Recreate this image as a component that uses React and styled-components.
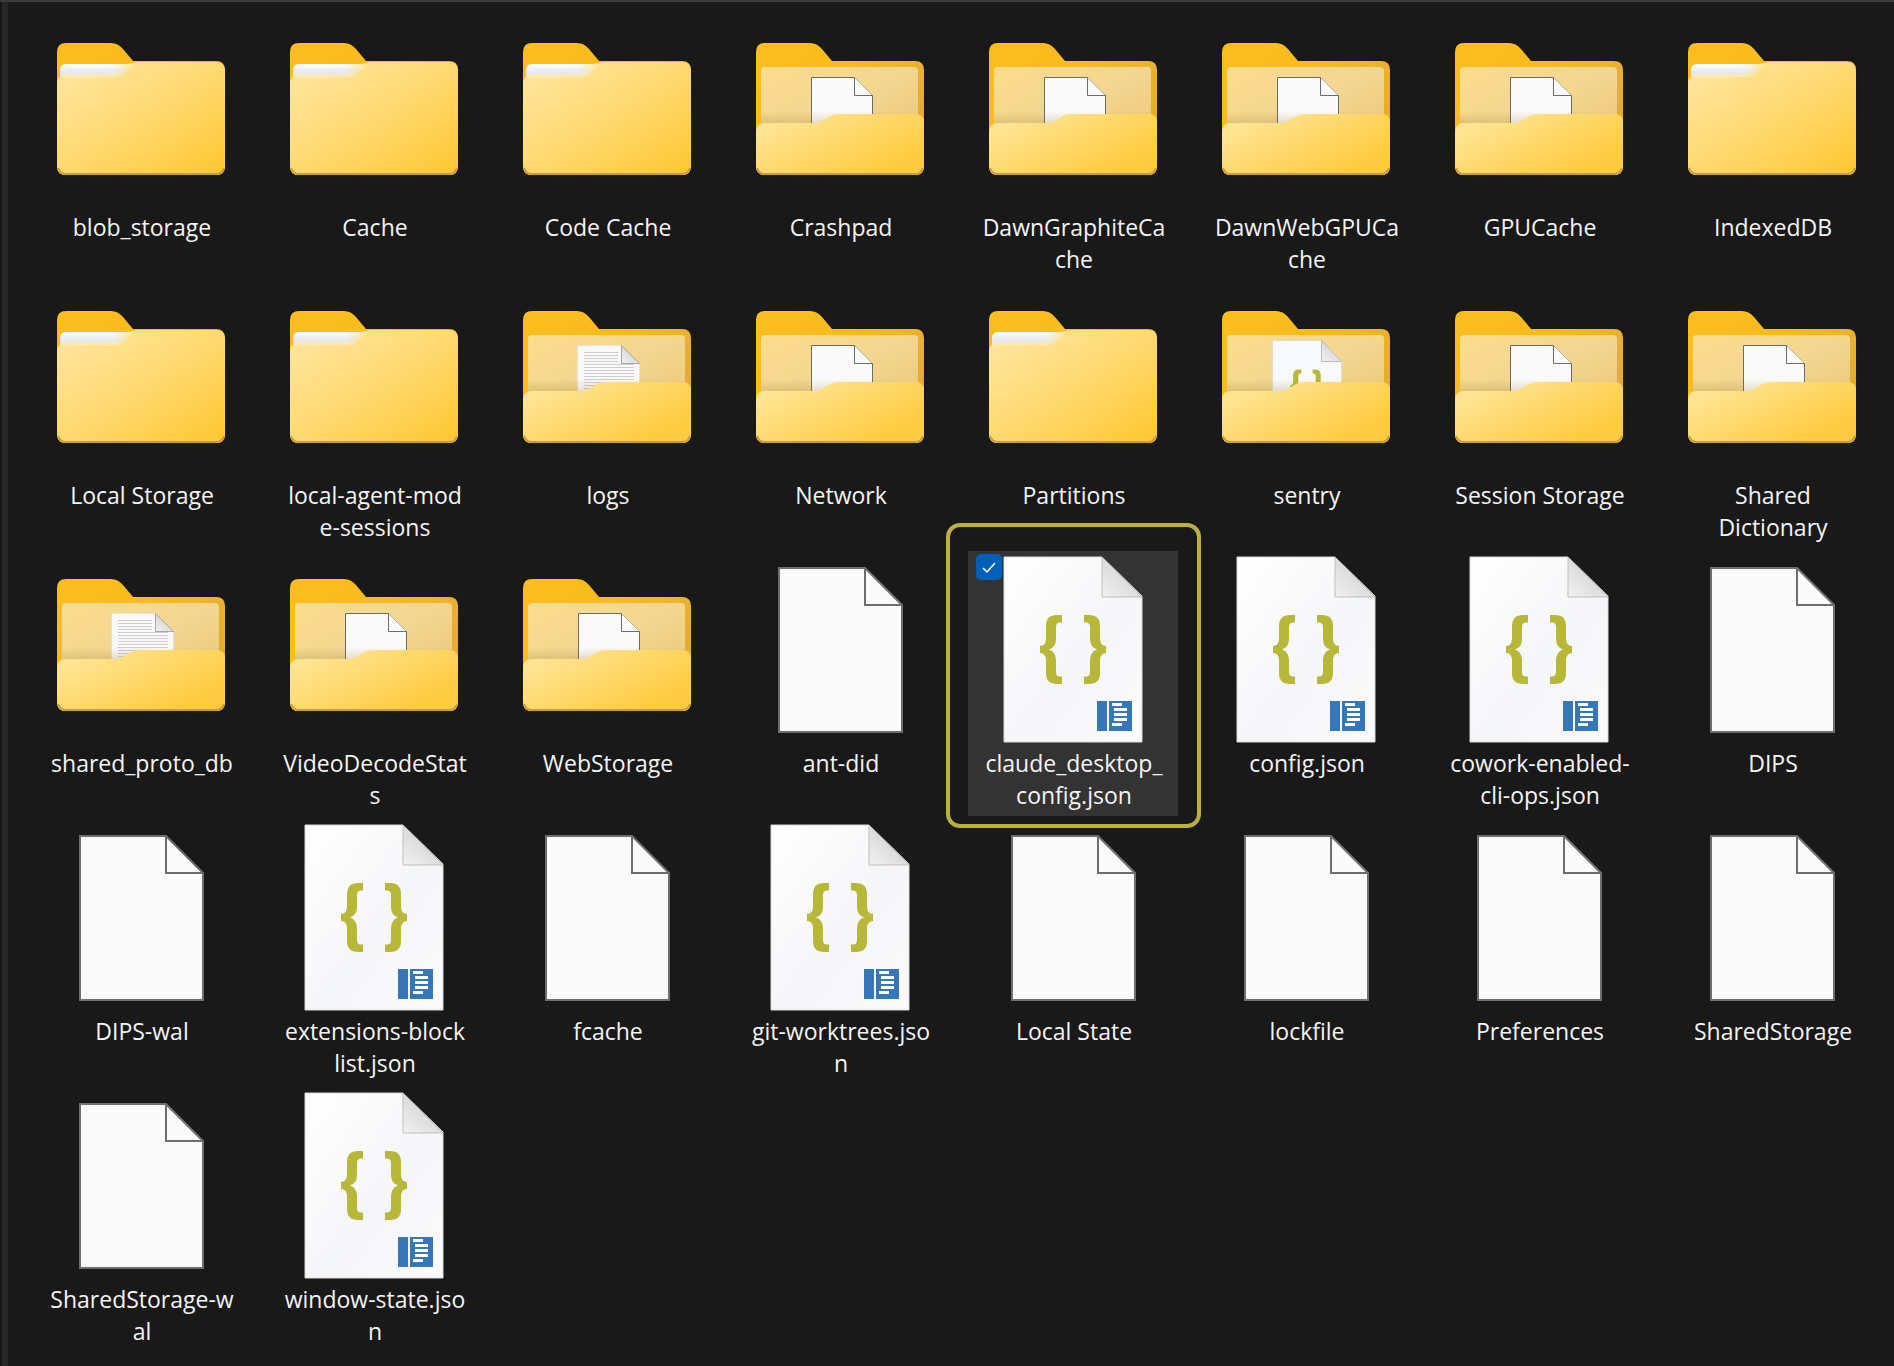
import React from "react";
import styled, { createGlobalStyle, css } from "styled-components";

const GlobalStyle = createGlobalStyle`
  *, *::before, *::after { box-sizing: border-box; }
  html { background: #191919; }
  body {
    margin: 0;
    background: #191919;
    color: #f4f4f4;
    font-family: "Open Sans", "Noto Sans", sans-serif;
  }
`;

const Pane = styled.main`
  min-height: 100vh;
  border-top: 2px solid #3c3c3c;
  background: linear-gradient(90deg, #151515 2px, #262626 2px, #262626 8px, #191919 8px);
  padding: 13px 16px 0 36px;
`;

const FileGrid = styled.ul`
  list-style: none;
  margin: 0;
  padding: 0;
  display: grid;
  grid-template-columns: repeat(auto-fill, 210px);
  gap: 3px 23px;
`;

const Tile = styled.li`
  position: relative;
  display: flex;
  flex-direction: column;
  align-items: center;
  height: 265px;
  padding-top: 4px;
  ${(p) =>
    p.$selected &&
    css`
      background: #333333;
      &::after {
        content: "";
        position: absolute;
        inset: -28px -23px -12px -22px;
        border: 4px solid #b9b03f;
        border-radius: 14px;
        pointer-events: none;
      }
    `}
`;

const Glyph = styled.svg`
  display: block;
  width: 192px;
  height: 192px;
`;

const FileName = styled.span`
  padding-left: 2px;
  font-size: 23px;
  line-height: 32px;
  text-align: center;
  white-space: pre;
`;

const Check = styled.input`
  appearance: none;
  position: absolute;
  top: 3px;
  left: 8px;
  width: 26px;
  height: 26px;
  margin: 0;
  border-radius: 5px;
  background: #005fb8;
`;

const CheckMark = styled.svg`
  position: absolute;
  top: 3px;
  left: 8px;
  width: 26px;
  height: 26px;
  pointer-events: none;
`;

const SharedDefs = styled.svg`
  position: absolute;
  width: 0;
  height: 0;
`;

const BACK =
  "M12 33Q12 24 21 24H66Q73 24 78 30L88 42H171Q180 42 180 51V147Q180 156 171 156H21Q12 156 12 147Z";
const BRACE =
  "M85 60V67.500H83Q79 67.500 79 72V84Q79 92 72 94.500Q79 97 79 105V117Q79 121.500 83 121.500H85V129H80Q69 129 69 118V106Q69 98 63 98V91Q69 91 69 83V71Q69 60 80 60Z";

function Gradients() {
  return (
    <SharedDefs aria-hidden="true">
      <defs>
        <linearGradient id="tab" x1="0" y1="0" x2="1" y2="1">
          <stop offset="0" stopColor="#fcbd1e" />
          <stop offset=".35" stopColor="#fabb1c" />
          <stop offset=".6" stopColor="#e9b032" />
          <stop offset="1" stopColor="#e0a526" />
        </linearGradient>
        <linearGradient id="front" gradientUnits="userSpaceOnUse" x1="45" y1="35" x2="135" y2="175">
          <stop offset="0" stopColor="#ffe59e" />
          <stop offset=".5" stopColor="#ffd970" />
          <stop offset="1" stopColor="#ffc834" />
        </linearGradient>
        <linearGradient id="pocket" gradientUnits="userSpaceOnUse" x1="50" y1="95" x2="90" y2="175">
          <stop offset="0" stopColor="#ffe493" />
          <stop offset=".5" stopColor="#ffd86a" />
          <stop offset="1" stopColor="#ffcb40" />
        </linearGradient>
        <linearGradient id="inner" x1="0" y1="0" x2="1" y2="1">
          <stop offset="0" stopColor="#fbdd8e" />
          <stop offset=".5" stopColor="#f3d690" />
          <stop offset="1" stopColor="#e8c678" />
        </linearGradient>
        <linearGradient id="slip" x1="0" y1="0" x2="0" y2="1">
          <stop offset="0" stopColor="#ffffff" />
          <stop offset=".35" stopColor="#eef2f7" />
          <stop offset=".65" stopColor="#e6e9ee" />
          <stop offset="1" stopColor="#ffe9ae" />
        </linearGradient>
        <linearGradient id="slipFade" x1="0" y1="0" x2="1" y2="0">
          <stop offset=".7" stopColor="#ffe59a" stopOpacity="0" />
          <stop offset="1" stopColor="#ffe59a" />
        </linearGradient>
        <linearGradient id="sheet" x1="0" y1="0" x2="1" y2="1">
          <stop offset="0" stopColor="#ffffff" />
          <stop offset=".55" stopColor="#f5f6f8" />
          <stop offset="1" stopColor="#fbfbfc" />
        </linearGradient>
        <linearGradient id="fold" x1="0" y1="1" x2=".6" y2=".3">
          <stop offset="0" stopColor="#f1f1f1" />
          <stop offset="1" stopColor="#d6d6d6" />
        </linearGradient>
        <linearGradient id="shade" x1="0" y1="0" x2="0" y2="1">
          <stop offset="0" stopColor="#8a6a20" stopOpacity="0" />
          <stop offset="1" stopColor="#8a6a20" stopOpacity=".26" />
        </linearGradient>
      </defs>
    </SharedDefs>
  );
}

function Braces({ transform }) {
  return (
    <g fill="#b7b83a" transform={transform}>
      <path d={BRACE} />
      <path d={BRACE} transform="matrix(-1 0 0 1 192 0)" />
    </g>
  );
}

function Folder() {
  return (
    <Glyph viewBox="0 0 192 192" aria-hidden="true">
      <path d={BACK} fill="url(#tab)" />
      <path
        d="M12 65Q12 59 15 58V52Q15 45 22 45H82L88 44Q90 43 94 43H171Q180 43 180 52V147Q180 156 171 156H21Q12 156 12 147Z"
        fill="url(#front)"
      />
      <path d="M15 58V51Q15 45 22 45H89L80 53Q76 58 69 58Z" fill="url(#slip)" />
      <path d="M15 58V51Q15 45 22 45H89L80 53Q76 58 69 58Z" fill="url(#slipFade)" />
      <path d="M13 149Q15 155 21 155H171Q177 155 179 149" fill="none" stroke="#cf9d2c" strokeWidth="2" />
    </Glyph>
  );
}

function BlankSheet() {
  return (
    <g fill="#fafafa" stroke="#6b6b6b" strokeWidth="1">
      <path d="M67.500 120V58.500H110.500L128.500 76.500V120Z" />
      <path d="M110.500 58.500V76.500H128.500" />
    </g>
  );
}

function TextSheet() {
  return (
    <g strokeWidth="1">
      <path d="M66.500 120V58.500H110L128.500 76.500V120Z" fill="#f9f9fa" stroke="#e6e2d8" />
      <path
        d="M73 65.500H107M73 68.500H107M73 71.500H107M73 74.500H107M73 77.500H123M73 80.500H123M73 83.500H123M73 86.500H123M73 89.500H123M73 92.500H123M73 95.500H123M73 98.500H123M73 101.500H123"
        stroke="#cccdd1"
      />
      <path d="M110.500 58.500V76.500H128.500Z" fill="url(#fold)" stroke="#a6a6a6" />
    </g>
  );
}

function JsonSheet() {
  return (
    <g strokeWidth="1">
      <path d="M62.500 120V53.500H111L131.500 74V120Z" fill="#f8f9fa" stroke="#e4dcc6" />
      <path d="M111.500 53.500V74.500H131.500Z" fill="url(#fold)" stroke="#bdbdbd" />
      <Braces transform="translate(48 52) scale(.51)" />
    </g>
  );
}

const sheets = { blank: BlankSheet, text: TextSheet, json: JsonSheet };

function OpenFolder({ content }) {
  const Sheet = sheets[content];
  return (
    <Glyph viewBox="0 0 192 192" aria-hidden="true">
      <path d={BACK} fill="url(#tab)" />
      <rect x="17" y="48" width="157" height="80" rx="4" fill="url(#inner)" />
      <Sheet />
      <path d="M17 92H174V108H17Z" fill="url(#shade)" />
      <path
        d="M12 113Q12 104 21 104H69Q75 104 79 101L86 97Q90 95 95 95H171Q180 95 180 103V147Q180 156 171 156H21Q12 156 12 147Z"
        fill="url(#pocket)"
      />
      <path d="M13 149Q15 155 21 155H171Q177 155 179 149" fill="none" stroke="#cf9d2c" strokeWidth="2" />
    </Glyph>
  );
}

function BlankFile() {
  return (
    <Glyph viewBox="0 0 192 192" aria-hidden="true">
      <g fill="#fafafa" stroke="#6e6e6e" strokeWidth="2">
        <path d="M35 13H121L158 50V177H35Z" />
        <path d="M121 13V50H158" fill="none" />
      </g>
    </Glyph>
  );
}

function JsonFile() {
  return (
    <Glyph viewBox="0 0 192 192" aria-hidden="true">
      <path d="M27 2H125L165 41V187H27Z" fill="url(#sheet)" stroke="#d9d9d9" strokeWidth="1" />
      <path d="M125 2L165 42H125Z" fill="url(#fold)" stroke="#bfbfbf" strokeWidth="1" />
      <Braces />
      <rect x="120" y="146" width="10" height="30" fill="#3577b8" />
      <rect x="132" y="146" width="23" height="30" fill="#3577b8" />
      <path
        d="M135 149.500H145M137 154.500H150M137 159.500H150M137 164.500H150M135 169.500H145"
        stroke="#ffffff"
        strokeWidth="3"
      />
    </Glyph>
  );
}

const items = [
  ["folder", "blob_storage"],
  ["folder", "Cache"],
  ["folder", "Code Cache"],
  ["open", "Crashpad", "blank"],
  ["open", "DawnGraphiteCa\nche", "blank"],
  ["open", "DawnWebGPUCa\nche", "blank"],
  ["open", "GPUCache", "blank"],
  ["folder", "IndexedDB"],
  ["folder", "Local Storage"],
  ["folder", "local-agent-mod\ne-sessions"],
  ["open", "logs", "text"],
  ["open", "Network", "blank"],
  ["folder", "Partitions"],
  ["open", "sentry", "json"],
  ["open", "Session Storage", "blank"],
  ["open", "Shared\nDictionary", "blank"],
  ["open", "shared_proto_db", "text"],
  ["open", "VideoDecodeStat\ns", "blank"],
  ["open", "WebStorage", "blank"],
  ["file", "ant-did"],
  ["json", "claude_desktop_\nconfig.json"],
  ["json", "config.json"],
  ["json", "cowork-enabled-\ncli-ops.json"],
  ["file", "DIPS"],
  ["file", "DIPS-wal"],
  ["json", "extensions-block\nlist.json"],
  ["file", "fcache"],
  ["json", "git-worktrees.jso\nn"],
  ["file", "Local State"],
  ["file", "lockfile"],
  ["file", "Preferences"],
  ["file", "SharedStorage"],
  ["file", "SharedStorage-w\nal"],
  ["json", "window-state.jso\nn"],
];

const glyphs = { folder: Folder, open: OpenFolder, file: BlankFile, json: JsonFile };
const SELECTED = 20;

export default function App() {
  return (
    <Pane>
      <GlobalStyle />
      <Gradients />
      <FileGrid>
        {items.map(([kind, name, content], i) => {
          const Icon = glyphs[kind];
          const selected = i === SELECTED;
          return (
            <Tile key={name} $selected={selected}>
              <Icon content={content} />
              <FileName as={selected ? "label" : "span"} htmlFor={selected ? "file-check" : undefined}>
                {name}
              </FileName>
              {selected && (
                <>
                  <Check id="file-check" type="checkbox" defaultChecked />
                  <CheckMark viewBox="0 0 26 26" aria-hidden="true">
                    <path d="M7 14L11 18L19 9" fill="none" stroke="#ffffff" strokeWidth="1.500" />
                  </CheckMark>
                </>
              )}
            </Tile>
          );
        })}
      </FileGrid>
    </Pane>
  );
}
